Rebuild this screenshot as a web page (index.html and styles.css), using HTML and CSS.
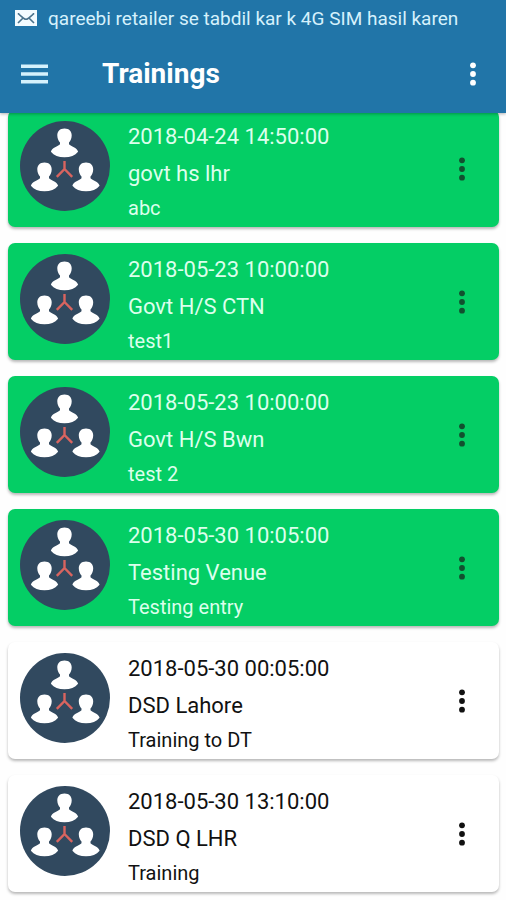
FILE: index.html
```html
<!DOCTYPE html>
<html lang="en">
<head>
<meta charset="utf-8">
<meta name="viewport" content="width=device-width, initial-scale=1">
<title>Trainings</title>
<link rel="stylesheet" href="styles.css">
</head>
<body>
<svg class="defs" aria-hidden="true">
  <symbol id="team" viewBox="0 0 90 90">
    <defs>
      <path id="person" d="M0 0C4.700 0 7.300 2.800 7.200 7C7.100 10.200 6 12.400 4.500 14V15.800C6.500 18.200 12.500 18.600 13.600 23.300C10.500 27 6 28.800 0 28.800S-10.500 27-13.600 23.300C-12.500 18.600-6.500 18.200-4.500 15.800V14C-6 12.400-7.100 10.200-7.200 7C-7.300 2.800-4.700 0 0 0Z"/>
    </defs>
    <circle cx="45" cy="45" r="45" fill="#31495f"/>
    <path d="M44.500 40V48L36.800 55.800M44.500 48L52.200 55.800" fill="none" stroke="#d9645f" stroke-width="2.400"/>
    <g fill="#fff">
      <use href="#person" x="44.500" y="7.500"/>
      <use href="#person" x="24.500" y="41.500"/>
      <use href="#person" x="66" y="41.500"/>
    </g>
  </symbol>
  <symbol id="dots" viewBox="0 0 8 26">
    <circle cx="4" cy="4.300" r="2.900"/><circle cx="4" cy="13" r="2.900"/><circle cx="4" cy="21.700" r="2.900"/>
  </symbol>
</svg>

<header class="header">
  <div class="status">
    <svg class="mail" viewBox="0 0 22 16" aria-hidden="true">
      <rect width="22" height="16" fill="#f3fbff"/>
      <path d="M3 3.500L8 8L3 13M19 3.500L14 8L19 13M3 3.500L9 8.500Q11 10 13 8.500L19 3.500" fill="none" stroke="#49728c" stroke-width="1.600"/>
    </svg>
    <span>qareebi retailer se tabdil kar k 4G SIM hasil karen</span>
  </div>
  <div class="toolbar">
    <button class="icon-button" type="button" aria-label="Open navigation">
      <svg class="menu" viewBox="0 0 27 20" aria-hidden="true"><path d="M0 2.300H27M0 10H27M0 17.700H27" stroke="#d5f1fc" stroke-width="3.400"/></svg>
    </button>
    <h1 class="title">Trainings</h1>
    <button class="icon-button" type="button" aria-label="More options"><svg class="dots" aria-hidden="true"><use href="#dots"/></svg></button>
  </div>
</header>

<main>
  <ul class="list">
    <li class="card done">
      <svg class="avatar" aria-hidden="true"><use href="#team"/></svg>
      <div class="details"><p>2018-04-24 14:50:00</p><p>govt hs lhr</p><p class="note">abc</p></div>
      <button class="icon-button" type="button" aria-label="Options for govt hs lhr"><svg class="dots" aria-hidden="true"><use href="#dots"/></svg></button>
    </li>
    <li class="card done">
      <svg class="avatar" aria-hidden="true"><use href="#team"/></svg>
      <div class="details"><p>2018-05-23 10:00:00</p><p>Govt H/S CTN</p><p class="note">test1</p></div>
      <button class="icon-button" type="button" aria-label="Options for Govt H/S CTN"><svg class="dots" aria-hidden="true"><use href="#dots"/></svg></button>
    </li>
    <li class="card done">
      <svg class="avatar" aria-hidden="true"><use href="#team"/></svg>
      <div class="details"><p>2018-05-23 10:00:00</p><p>Govt H/S Bwn</p><p class="note">test 2</p></div>
      <button class="icon-button" type="button" aria-label="Options for Govt H/S Bwn"><svg class="dots" aria-hidden="true"><use href="#dots"/></svg></button>
    </li>
    <li class="card done">
      <svg class="avatar" aria-hidden="true"><use href="#team"/></svg>
      <div class="details"><p>2018-05-30 10:05:00</p><p>Testing Venue</p><p class="note">Testing entry</p></div>
      <button class="icon-button" type="button" aria-label="Options for Testing Venue"><svg class="dots" aria-hidden="true"><use href="#dots"/></svg></button>
    </li>
    <li class="card">
      <svg class="avatar" aria-hidden="true"><use href="#team"/></svg>
      <div class="details"><p>2018-05-30 00:05:00</p><p>DSD Lahore</p><p class="note">Training to DT</p></div>
      <button class="icon-button" type="button" aria-label="Options for DSD Lahore"><svg class="dots" aria-hidden="true"><use href="#dots"/></svg></button>
    </li>
    <li class="card">
      <svg class="avatar" aria-hidden="true"><use href="#team"/></svg>
      <div class="details"><p>2018-05-30 13:10:00</p><p>DSD Q LHR</p><p class="note">Training</p></div>
      <button class="icon-button" type="button" aria-label="Options for DSD Q LHR"><svg class="dots" aria-hidden="true"><use href="#dots"/></svg></button>
    </li>
  </ul>
</main>
</body>
</html>
```
FILE: styles.css
```css
* {
  box-sizing: border-box;
}

body {
  margin: 0;
  background: #fefefe;
  color: #111;
  font-family: Roboto, "Liberation Sans", sans-serif;
  font-size: 22px;
}

p,
h1 {
  margin: 0;
}

.defs {
  position: absolute;
  width: 0;
  height: 0;
}

.header {
  position: sticky;
  top: 0;
  z-index: 1;
  background: #2175a8;
  box-shadow: 0 1px 3px rgba(0, 0, 0, 0.3);
  color: #fff;
}

.status {
  display: flex;
  align-items: center;
  gap: 11px;
  height: 36px;
  padding-left: 15px;
  color: #d5f1fc;
  font-size: 19px;
  white-space: nowrap;
}

.mail {
  width: 22px;
  height: 16px;
  flex: none;
}

.toolbar {
  display: flex;
  align-items: center;
  height: 77px;
  padding: 0 13px 2px 14px;
}

.title {
  flex: 1;
  margin-left: 48px;
  font-size: 28px;
  font-weight: 700;
}

.icon-button {
  display: flex;
  align-items: center;
  justify-content: center;
  width: 40px;
  height: 48px;
  flex: none;
  padding: 0;
  border: 0;
  background: none;
  color: inherit;
}

.menu {
  width: 27px;
  height: 20px;
}

.dots {
  width: 8px;
  height: 26px;
  fill: currentColor;
}

.list {
  display: flex;
  flex-direction: column;
  gap: 16px;
  margin: -3px 0 0;
  padding: 0 7px 7px 8px;
  list-style: none;
}

.card {
  display: flex;
  align-items: center;
  min-height: 117px;
  padding: 0 17px 0 12px;
  border-radius: 7px;
  background: #fff;
  box-shadow: 0 2px 3px rgba(0, 0, 0, 0.28);
}

.avatar {
  width: 90px;
  height: 90px;
  flex: none;
  margin-bottom: 6px;
}

.details {
  flex: 1;
  min-width: 0;
  padding: 8px 0 3px 18px;
  line-height: 37px;
}

.note {
  font-size: 20px;
  line-height: 32px;
}

.done {
  background: #04ce65;
}

.done .details {
  color: #dcffec;
}

.done .icon-button {
  color: #12502f;
}
```
